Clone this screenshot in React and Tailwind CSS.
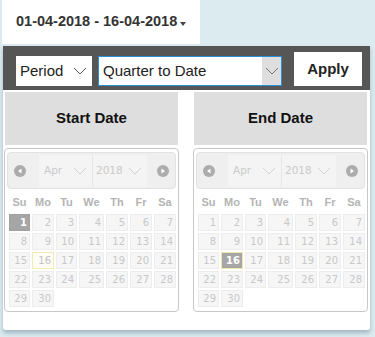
import React from 'react';

const COLS = 'grid grid-cols-[21px_22px_21px_25px_22px_22px_22px] gap-x-[2px]';
const DAY_NAMES = ['Su', 'Mo', 'Tu', 'We', 'Th', 'Fr', 'Sa'];

function Chevron({ className = '' }) {
  return (
    <svg className={className} width="14" height="8" viewBox="0 0 14 8" fill="none">
      <path d="M1 1l6 6 6-6" stroke="currentColor" strokeWidth="1" />
    </svg>
  );
}

function Arrow({ dir }) {
  return (
    <div className="w-[12px] h-[12px] rounded-full bg-[#acacac] flex items-center justify-center">
      <svg width="6" height="6" viewBox="0 0 6 6">
        {dir === 'prev' ? <path d="M4.5 0.5v5L1 3z" fill="#fff" /> : <path d="M1.5 0.5v5L5 3z" fill="#fff" />}
      </svg>
    </div>
  );
}

function Calendar({ selected, highlight }) {
  const days = [];
  for (let i = 1; i <= 30; i++) days.push(i);
  const rows = [];
  for (let r = 0; r < 5; r++) rows.push(days.slice(r * 7, r * 7 + 7));

  return (
    <div className="mt-[3px] h-[164px] border border-[#c8c8c8] rounded-[4px] bg-white px-[2px] pt-[3px]">
      {/* header with month / year */}
      <div className="h-[37px] bg-[#efefef] border border-[#e2e2e2] rounded-[4px] flex items-center px-[6px]">
        <Arrow dir="prev" />
        <div className="ml-[13px] flex h-[32px] font-['DejaVu_Sans',sans-serif]">
          <div className="w-[54px] bg-[#f4f4f4] border-r border-[#e6e6e6] flex items-center justify-between pl-[5px] pr-[5px] text-[10.5px] text-[#cacaca]">
            <span>Apr</span>
            <Chevron className="text-[#d2d2d2]" />
          </div>
          <div className="w-[54px] bg-[#f4f4f4] flex items-center justify-between pl-[3px] pr-[5px] text-[10.5px] text-[#cacaca]">
            <span>2018</span>
            <Chevron className="text-[#d2d2d2]" />
          </div>
        </div>
        <div className="ml-auto">
          <Arrow dir="next" />
        </div>
      </div>

      <div className="pl-[2px]">
        <div className={`${COLS} mt-[6px] h-[14px] text-[11px] font-bold text-[#b4b4b4]`}>
          {DAY_NAMES.map((d) => (
            <div key={d} className="text-center leading-[14px]">{d}</div>
          ))}
        </div>
        <div className="mt-[5px] flex flex-col gap-y-[2px] font-['DejaVu_Sans',sans-serif]">
          {rows.map((row, ri) => (
            <div key={ri} className={`${COLS} h-[17px]`}>
              {row.map((d) => {
                let cls = 'bg-[#f6f6f6] border-[#ededed] text-[#c8c8c8]';
                if (d === selected) cls = 'bg-[#a6a6a6] border-[#a0a0a0] text-white font-bold';
                if (d === highlight) cls = 'bg-[#fdfcf6] border-[#f5ebb0] text-[#c2c2c2]';
                if (d === selected && d === highlight) cls = 'bg-[#a6a6a6] border-[#f1e7a8] text-white font-bold';
                return (
                  <div key={d} className={`border text-right pr-[2px] text-[10px] leading-[15px] ${cls}`}>
                    {d}
                  </div>
                );
              })}
            </div>
          ))}
        </div>
      </div>
    </div>
  );
}

export default function App() {
  return (
    <div className="w-[375px] h-[337px] bg-[#dcebf0] overflow-hidden font-['Liberation_Sans',Arial,sans-serif]">
      {/* Date range trigger */}
      <div className="ml-[2px] w-[198px] h-[44px] bg-white flex items-center pl-[14px] pb-[1px]">
        <span className="text-[14.5px] font-bold text-[#333]">01-04-2018 - 16-04-2018</span>
        <svg className="ml-[3px] mt-[4px]" width="6" height="4" viewBox="0 0 6 4">
          <path d="M0 0h6L3 4z" fill="#444" />
        </svg>
      </div>

      {/* Picker panel */}
      <div className="mt-[2px] ml-[3px] w-[367px] h-[284px] bg-white rounded-b-[3px] shadow-[0_3px_4px_rgba(120,145,160,0.6)]">
        <div className="h-[44px] bg-[#565656] flex items-end pb-[4px] pl-[13px]">
          <div className="w-[76px] h-[30px] bg-white flex items-center justify-between pl-[4px] pr-[5px] text-[15px] text-[#222]">
            <span>Period</span>
            <Chevron className="text-[#555]" />
          </div>
          <div className="ml-[6px] w-[184px] h-[30px] bg-white border border-[#2b8fd6] flex items-center text-[15px] text-[#222]">
            <span className="pl-[4px] flex-1">Quarter to Date</span>
            <div className="w-[19px] h-full bg-[#dedede] flex items-center justify-center">
              <Chevron className="text-[#777]" />
            </div>
          </div>
          <div className="ml-[12px] w-[68px] h-[34px] bg-white flex items-center justify-center text-[15px] font-bold text-[#222]">
            Apply
          </div>
        </div>

        <div className="flex pt-[2px] pl-[1px] gap-x-[14px]">
          <div className="w-[175px]">
            <div className="mx-[1px] h-[53px] bg-[#dedede] flex items-center justify-center text-[15px] font-bold text-[#111]">
              Start Date
            </div>
            <Calendar selected={1} highlight={16} />
          </div>
          <div className="w-[175px]">
            <div className="mx-[1px] h-[53px] bg-[#dedede] flex items-center justify-center text-[15px] font-bold text-[#111]">
              End Date
            </div>
            <Calendar selected={16} highlight={16} />
          </div>
        </div>
      </div>
    </div>
  );
}
